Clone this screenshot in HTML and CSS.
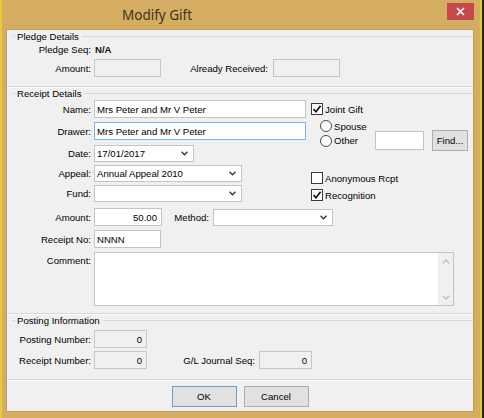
FILE: index.html
```html
<!DOCTYPE html>
<html lang="en">
<head>
  <meta charset="UTF-8">
  <meta name="viewport" content="width=device-width, initial-scale=1.0">
  <title>Modify Gift</title>
  <link rel="stylesheet" href="styles.css">
</head>
<body>

<div class="window">
  <div class="titlebar">
    <span class="title">Modify Gift</span>
    <div class="close-btn">
      <svg width="9" height="9" viewBox="0 0 9 9"><path d="M1 1L8 8M8 1L1 8" stroke="#fff" stroke-width="1.7"/></svg>
    </div>
  </div>

  <div class="client">
    <!-- Pledge -->
    <div class="group pledge">
      <div class="group-title"><span>Pledge Details</span></div>
      <div class="row seq-row">
        <label class="lbl">Pledge Seq:</label>
        <b class="seq">N/A</b>
      </div>
      <div class="row">
        <label class="lbl">Amount:</label>
        <input class="field disabled w-pledge pledge-amt" type="text" disabled>
        <label class="lbl lbl-received">Already Received:</label>
        <input class="field disabled w-pledge" type="text" disabled>
      </div>
    </div>

    <!-- Receipt -->
    <div class="group receipt">
      <div class="group-title"><span>Receipt Details</span></div>
      <div class="top">
        <div class="left-col">
          <div class="row name-row">
            <label class="lbl">Name:</label>
            <input class="field w-name" type="text" value="Mrs Peter and Mr V Peter">
          </div>
          <div class="row drawer-row">
            <label class="lbl">Drawer:</label>
            <input class="field w-name focused" type="text" value="Mrs Peter and Mr V Peter">
          </div>
          <div class="row combo-row date-row">
            <label class="lbl">Date:</label>
            <div class="combo w-date"><span>17/01/2017</span><svg class="chev" width="7" height="5" viewBox="0 0 7 5"><path d="M0.5 0.8L3.5 3.8L6.5 0.8" fill="none" stroke="#333" stroke-width="1.3"/></svg></div>
          </div>
          <div class="row combo-row">
            <label class="lbl">Appeal:</label>
            <div class="combo w-appeal"><span>Annual Appeal 2010</span><svg class="chev" width="7" height="5" viewBox="0 0 7 5"><path d="M0.5 0.8L3.5 3.8L6.5 0.8" fill="none" stroke="#333" stroke-width="1.3"/></svg></div>
          </div>
          <div class="row combo-row">
            <label class="lbl">Fund:</label>
            <div class="combo w-appeal"><span></span><svg class="chev" width="7" height="5" viewBox="0 0 7 5"><path d="M0.5 0.8L3.5 3.8L6.5 0.8" fill="none" stroke="#333" stroke-width="1.3"/></svg></div>
          </div>
        </div>

        <div class="right-col">
          <div class="opt joint">
            <span class="check"><svg width="10" height="10" viewBox="0 0 10 10"><path d="M1.5 5.2L4 7.8L8.6 1.8" fill="none" stroke="#111" stroke-width="1.7"/></svg></span>
            <span>Joint Gift</span>
          </div>
          <div class="opt sub spouse">
            <span class="radio"></span>
            <span>Spouse</span>
          </div>
          <div class="opt sub other">
            <span class="other-opt"><span class="radio"></span><span>Other</span></span>
            <input class="field w-other" type="text">
            <button class="btn find">Find...</button>
          </div>
          <div class="opt anon">
            <span class="check"></span>
            <span>Anonymous Rcpt</span>
          </div>
          <div class="opt recog">
            <span class="check"><svg width="10" height="10" viewBox="0 0 10 10"><path d="M1.5 5.2L4 7.8L8.6 1.8" fill="none" stroke="#111" stroke-width="1.7"/></svg></span>
            <span>Recognition</span>
          </div>
        </div>
      </div>

      <div class="row amount-row">
        <label class="lbl">Amount:</label>
        <input class="field w-amount num" type="text" value="50.00">
        <label class="lbl lbl-method">Method:</label>
        <div class="combo w-method"><span></span><svg class="chev" width="7" height="5" viewBox="0 0 7 5"><path d="M0.5 0.8L3.5 3.8L6.5 0.8" fill="none" stroke="#333" stroke-width="1.3"/></svg></div>
      </div>
      <div class="row receipt-row">
        <label class="lbl">Receipt No:</label>
        <input class="field w-receipt" type="text" value="NNNN">
      </div>
      <div class="row comment-row">
        <label class="lbl">Comment:</label>
        <div class="comment">
          <div class="scroll">
            <svg width="8" height="5" viewBox="0 0 8 5"><path d="M0.8 4.2L4 1L7.2 4.2" fill="none" stroke="#bdbdbd" stroke-width="1.3"/></svg>
            <svg width="8" height="5" viewBox="0 0 8 5"><path d="M0.8 0.8L4 4L7.2 0.8" fill="none" stroke="#bdbdbd" stroke-width="1.3"/></svg>
          </div>
        </div>
      </div>
    </div>

    <!-- Posting -->
    <div class="group posting">
      <div class="group-title"><span>Posting Information</span></div>
      <div class="row post-row">
        <label class="lbl">Posting Number:</label>
        <input class="field disabled w-post num" type="text" value="0" disabled>
      </div>
      <div class="row post-row2">
        <label class="lbl">Receipt Number:</label>
        <input class="field disabled w-post num" type="text" value="0" disabled>
        <label class="lbl lbl-journal">G/L Journal Seq:</label>
        <input class="field disabled w-post num" type="text" value="0" disabled>
      </div>
    </div>

    <div class="buttons">
      <button class="btn default">OK</button>
      <button class="btn">Cancel</button>
    </div>
  </div>
</div>

</body>
</html>
```

FILE: styles.css
```css
body {
  margin: 0;
  width: 484px;
  height: 418px;
  overflow: hidden;
  background-color: #22261a;
  font-family: "Liberation Sans", Arial, sans-serif;
  font-size: 9.6px;
  color: #000;
}
.window {
  width: 478px;
  height: 418px;
  background-color: #d4ad62;
  border-left: 2px solid #e6cc33;
  border-right: 2px solid #e6cc33;
}
.titlebar {
  height: 30px;
  display: flex;
}
.title {
  padding-left: 120px;
  margin-top: 6px;
  font-family: "Noto Sans", "Open Sans", sans-serif;
  font-size: 13.5px;
  color: #3b3222;
}
.close-btn {
  margin-left: auto;
  margin-right: 6px;
  margin-top: 3px;
  width: 27px;
  height: 17px;
  background-color: #c8474b;
  display: flex;
  justify-content: center;
  align-items: center;
}
.client {
  margin-left: 5px;
  width: 466px;
  height: 381px;
  background-color: #f0f0f0;
  box-shadow: 0 0 0 1px #bf9e5b;
}

/* group boxes: only the top and bottom rules show */
.group {
  border-bottom: 1px solid #d8d8d8;
  box-shadow: 0 1px 0 #fbfbfb;
}
.group-title {
  height: 12px;
  display: flex;
  align-items: center;
  padding-left: 5px;
}
.group-title::before {
  content: '';
  width: 3px;
  border-top: 1px solid #d8d8d8;
  margin-right: 2px;
}
.group-title::after {
  content: '';
  flex: 1;
  border-top: 1px solid #d8d8d8;
  margin-left: 3px;
}
.pledge { padding-bottom: 9px; }
.receipt { padding-bottom: 7px; }
.posting { padding-bottom: 10px; }

.row {
  display: flex;
  align-items: center;
  height: 18px;
}
.lbl {
  width: 84px;
  margin-right: 3px;
  text-align: right;
  flex-shrink: 0;
}
.seq-row { height: 14px; }
.seq-row + .row { margin-top: 3px; }
.seq {
  margin-left: 1px;
  font-weight: bold;
  color: #111;
}
.pledge-amt { margin-left: 1px; }
.lbl-received { width: 107px; margin-right: 5px; }
.lbl-method { width: 47px; margin-right: 4px; }
.lbl-journal { width: 108px; margin-right: 4px; }

.field {
  box-sizing: border-box;
  height: 18px;
  margin: 0;
  padding: 0 2px;
  border: 1px solid #c3c3c3;
  background-color: white;
  font-family: inherit;
  font-size: 9.6px;
  color: #000;
  outline: none;
}
.field.disabled {
  background-color: #f0f0f0;
  border-color: #c6c6c6;
}
.field.focused { border-color: #7db3e8; }
.num { text-align: right; padding-right: 4px; }

.w-pledge { width: 67px; }
.w-name { width: 212px; }
.w-date { width: 100px; }
.w-appeal { width: 148px; }
.w-amount { width: 68px; }
.w-method { width: 120px; height: 19px; }
.w-receipt { width: 67px; }
.w-other { width: 49px; height: 19px; }
.w-post { width: 53px; }

.combo {
  box-sizing: border-box;
  height: 17px;
  display: flex;
  align-items: center;
  justify-content: space-between;
  padding: 0 5px 0 2px;
  border: 1px solid #c3c3c3;
  background-color: white;
  color: #000;
}

/* upper part of the receipt group */
.top { display: flex; }
.left-col { width: 299px; }
.name-row { margin-top: 1px; }
.drawer-row { margin-top: 4px; }
.combo-row { height: 17px; margin-top: 3px; }
.date-row { margin-top: 5px; }

.right-col { margin-left: 5px; flex: 1; }
.opt {
  display: flex;
  align-items: center;
  gap: 2px;
}
.opt.sub { padding-left: 9px; }
.joint { height: 18px; margin-top: 1px; }
.spouse { height: 12px; margin-top: 2px; }
.other { height: 21px; margin-top: -2px; }
.anon { height: 14px; margin-top: 20px; }
.recog { height: 14px; margin-top: 3px; }
.other-opt {
  width: 53px;
  display: flex;
  align-items: center;
  gap: 2px;
}
.find {
  margin-left: 6px;
  width: 36px;
  height: 21px;
}
.check {
  box-sizing: border-box;
  width: 12px;
  height: 12px;
  border: 1px solid #3a3a3a;
  background-color: white;
  display: flex;
  justify-content: center;
  align-items: center;
}
.radio {
  box-sizing: border-box;
  width: 12px;
  height: 12px;
  border: 1px solid #4a4a4a;
  border-radius: 50%;
  background-color: white;
}

.amount-row { margin-top: 6px; }
.receipt-row { margin-top: 4px; }
.comment-row {
  margin-top: 4px;
  height: 54px;
  align-items: flex-start;
}
.comment-row .lbl { padding-top: 3px; }
.comment {
  box-sizing: border-box;
  width: 360px;
  height: 54px;
  border: 1px solid #c3c3c3;
  background-color: white;
  display: flex;
  justify-content: flex-end;
}
.scroll {
  width: 15px;
  background-color: #f0f0f0;
  display: flex;
  flex-direction: column;
  justify-content: space-between;
  align-items: center;
  padding: 6px 0 5px;
}

.post-row { margin-top: 4px; }
.post-row2 { margin-top: 3px; }

.btn {
  box-sizing: border-box;
  padding: 0;
  border: 1px solid #adadad;
  background-color: #e1e1e1;
  font-family: inherit;
  font-size: 9.6px;
  color: #000;
}
.buttons {
  margin-top: 6px;
  display: flex;
  justify-content: center;
  gap: 7px;
}
.buttons .btn {
  width: 65px;
  height: 21px;
}
.btn.default { border-color: #6f9ccf; }
```
